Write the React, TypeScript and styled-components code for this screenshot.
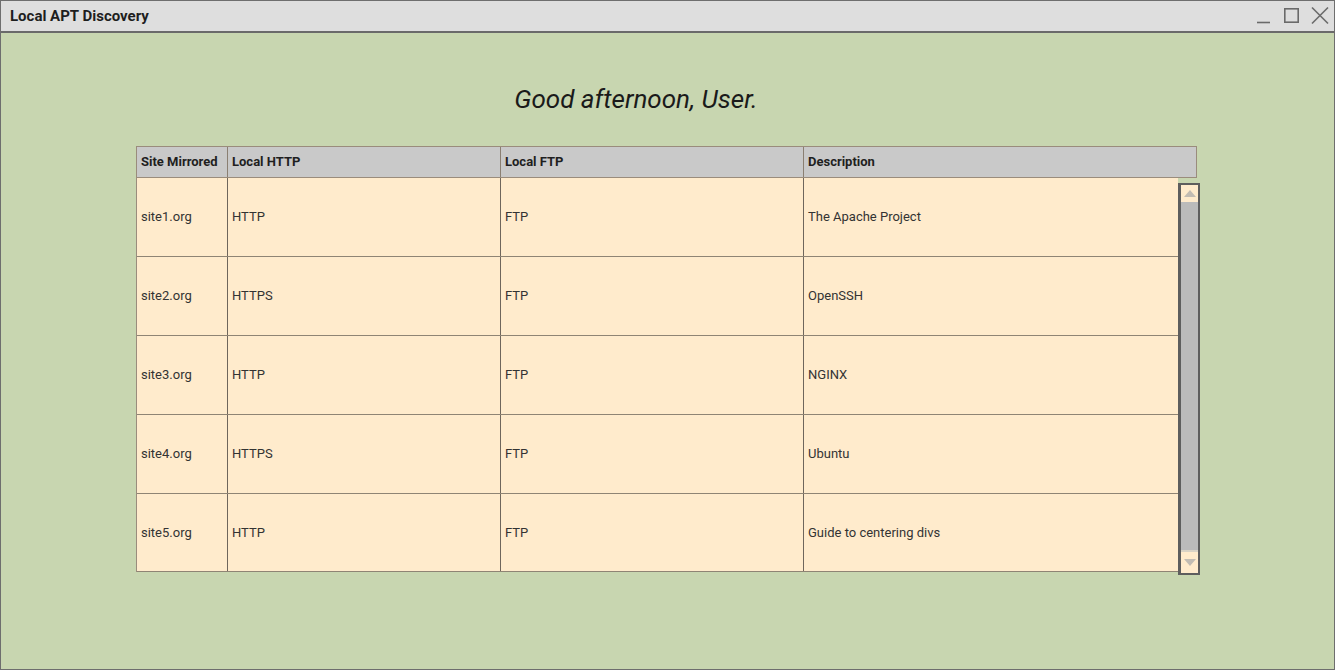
import React from "react";
import styled, { createGlobalStyle } from "styled-components";

const Global = createGlobalStyle`
  html, body { margin: 0; padding: 0; }
  body { font-family: Roboto, "Liberation Sans", Arial, sans-serif; }
  * { box-sizing: border-box; }
`;

const Window = styled.div`
  width: 1335px;
  height: 670px;
  border: 1px solid #6e6e6e;
  display: flex;
  flex-direction: column;
  background: #c8d6b0;
  overflow: hidden;
`;

const TitleBar = styled.div`
  height: 32px;
  flex: none;
  background: #dedede;
  border-bottom: 2px solid #6a6a6a;
  display: flex;
  align-items: center;
  justify-content: space-between;
  padding: 0 4px 0 9px;
`;

const Title = styled.div`
  font-weight: 700;
  font-size: 15px;
  color: #1e1e1e;
  margin-top: -1px;
`;

const Controls = styled.div`
  display: flex;
  align-items: center;
  gap: 10px;
  color: #6a6a6a;
`;

const Content = styled.div`
  flex: 1;
  display: flex;
  flex-direction: column;
  padding: 50px 0 0 135px;
`;

const Greeting = styled.h1`
  margin: 0;
  width: 1060px;
  padding-right: 60px;
  text-align: center;
  font-style: italic;
  font-weight: 400;
  font-size: 26px;
  line-height: 32px;
  color: #1a1a1a;
`;

const Table = styled.div`
  position: relative;
  width: 1061px;
  margin-top: 31px;
  font-size: 13px;
  color: #333;
`;

const cols = "90px 273px 303px 1fr";

const HeaderRow = styled.div`
  display: grid;
  grid-template-columns: ${cols};
  height: 32px;
  background: #c9c9c9;
  border: 1px solid #9a8c7c;
`;

const HeadCell = styled.div<{ $first?: boolean }>`
  display: flex;
  align-items: center;
  padding: 0 4px 1px;
  font-size: 13px;
  font-weight: 700;
  color: #1f1f1f;
  border-left: ${(p) => (p.$first ? "none" : "1px solid #8a7f72")};
`;

const Body = styled.div`
  width: 1042px;
  background: #ffebcc;
  border-left: 1px solid #9a8c7c;
`;

const Row = styled.div`
  display: grid;
  grid-template-columns: ${cols};
  height: 79px;
  border-bottom: 1px solid #8f8474;
  &:last-child {
    height: 78px;
  }
`;

const Cell = styled.div<{ $first?: boolean }>`
  display: flex;
  align-items: center;
  padding: 0 4px 1px;
  border-left: ${(p) => (p.$first ? "none" : "1px solid #6f665c")};
`;

const Scrollbar = styled.div`
  position: absolute;
  left: 1042px;
  top: 37px;
  width: 22px;
  height: 392px;
  border: 2px solid #5e5e5e;
  border-left-width: 3px;
  display: flex;
  flex-direction: column;
  background: #ffebcc;
`;

const Arrow = styled.div<{ $h: number }>`
  height: ${(p) => p.$h}px;
  flex: none;
  display: flex;
  align-items: center;
  justify-content: center;
`;

const Thumb = styled.div`
  flex: 1;
  background: #bbbbbb;
  border-bottom: 2px solid #d9d3c6;
`;

const rows = [
  ["site1.org", "HTTP", "FTP", "The Apache Project"],
  ["site2.org", "HTTPS", "FTP", "OpenSSH"],
  ["site3.org", "HTTP", "FTP", "NGINX"],
  ["site4.org", "HTTPS", "FTP", "Ubuntu"],
  ["site5.org", "HTTP", "FTP", "Guide to centering divs"],
];

export default function App() {
  return (
    <>
      <Global />
      <Window>
        <TitleBar>
          <Title>Local APT Discovery</Title>
          <Controls>
            <svg width="18" height="18" viewBox="0 0 18 18">
              <line x1="3" y1="15.5" x2="16" y2="15.5" stroke="currentColor" strokeWidth="1.6" />
            </svg>
            <svg width="18" height="18" viewBox="0 0 18 18">
              <rect x="2.8" y="1.8" width="13.4" height="13.4" fill="none" stroke="currentColor" strokeWidth="1.6" />
            </svg>
            <svg width="20" height="20" viewBox="0 0 20 20">
              <path d="M2 1.5 L18 17.5 M18 1.5 L2 17.5" stroke="currentColor" strokeWidth="1.6" fill="none" />
            </svg>
          </Controls>
        </TitleBar>
        <Content>
          <Greeting>Good afternoon, User.</Greeting>
          <Table>
            <HeaderRow>
              <HeadCell $first>Site Mirrored</HeadCell>
              <HeadCell>Local HTTP</HeadCell>
              <HeadCell>Local FTP</HeadCell>
              <HeadCell>Description</HeadCell>
            </HeaderRow>
            <Body>
              {rows.map((r) => (
                <Row key={r[0]}>
                  {r.map((c, i) => (
                    <Cell key={i} $first={i === 0}>
                      {c}
                    </Cell>
                  ))}
                </Row>
              ))}
            </Body>
            <Scrollbar>
              <Arrow $h={17}>
                <svg width="12" height="7" viewBox="0 0 12 7">
                  <polygon points="6,0 12,7 0,7" fill="#c2bcb3" />
                </svg>
              </Arrow>
              <Thumb />
              <Arrow $h={21}>
                <svg width="12" height="7" viewBox="0 0 12 7">
                  <polygon points="0,0 12,0 6,7" fill="#c2bcb3" />
                </svg>
              </Arrow>
            </Scrollbar>
          </Table>
        </Content>
      </Window>
    </>
  );
}
